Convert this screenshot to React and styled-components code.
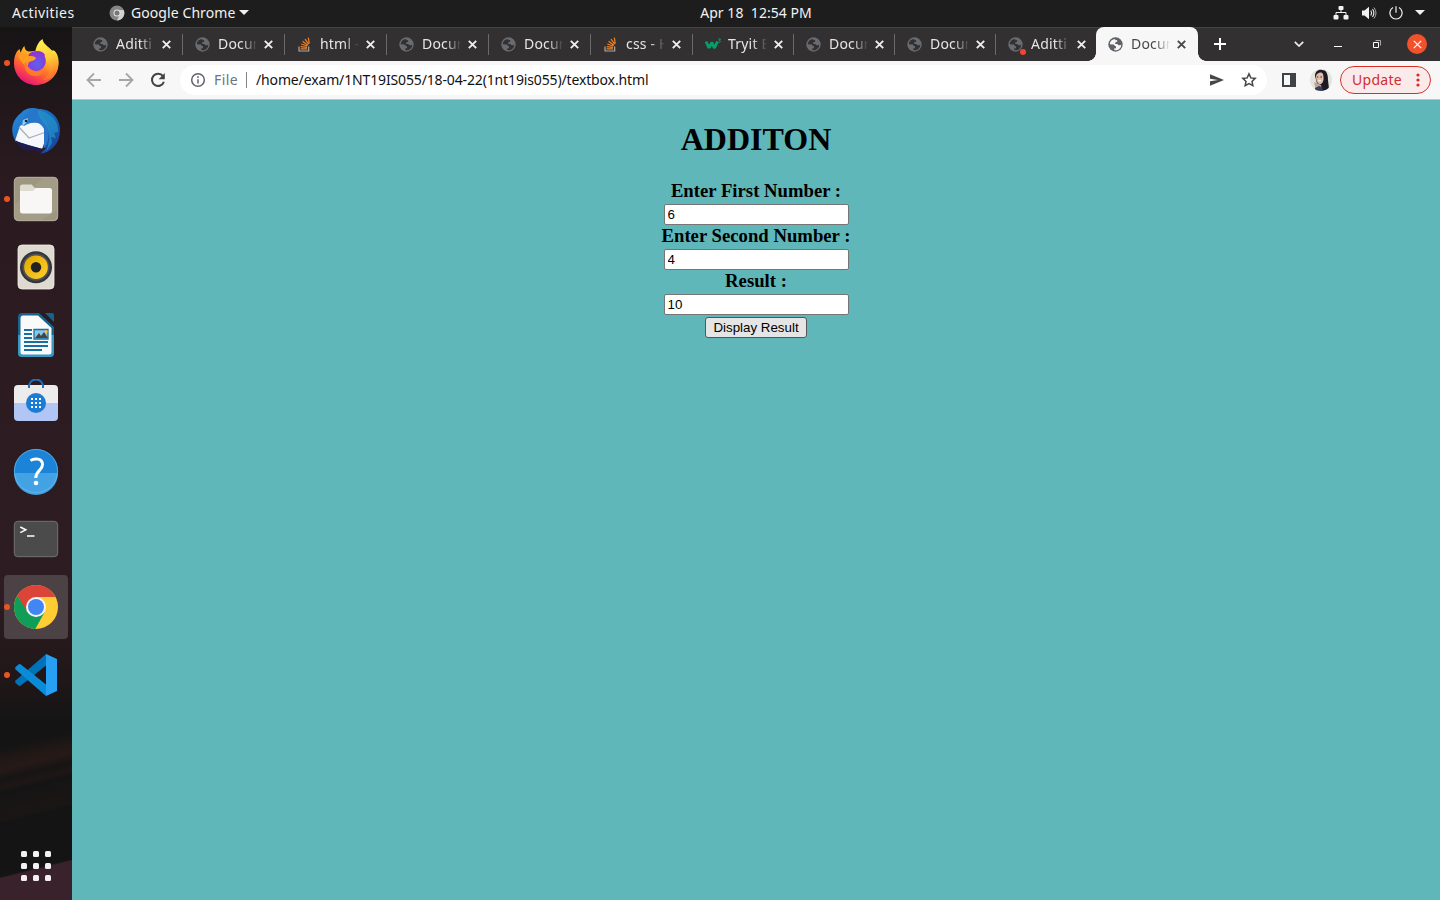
import React from 'react';
import styled, { createGlobalStyle } from 'styled-components';

const Global = createGlobalStyle`
  *{box-sizing:border-box}
  body{margin:0;overflow:hidden;background:#1d1d1d}
  svg{display:block;flex:none}
`;
const Desktop = styled.div`
  width:1440px;height:900px;display:flex;flex-direction:column;
  font-family:"Noto Sans",sans-serif;font-size:14px;
`;
const TopBar = styled.header`
  height:27px;flex:none;display:grid;grid-template-columns:1fr auto 1fr;align-items:center;padding-bottom:2px;
  background:#1d1d1d;color:#f2f2f2;font-size:14px;line-height:25px;
`;
const BarStart = styled.div`display:flex;align-items:center;padding-left:12px;`;
const Activities = styled.span`width:97px;letter-spacing:.42px;`;
const AppName = styled.span`margin:0 4px 0 6px;letter-spacing:.08px;`;
const Clock = styled.time`white-space:pre;letter-spacing:.05px;position:relative;left:36px;`;
const BarEnd = styled.div`display:flex;align-items:center;justify-content:flex-end;gap:12px;padding-right:15px;`;
const Workspace = styled.div`flex:1;display:flex;min-height:0;`;
const Dock = styled.nav`
  width:72px;display:flex;flex-direction:column;align-items:center;gap:4px;padding:4px 0 2px;
  background:
    linear-gradient(166deg,transparent 0 95.4%,#3a222d 95.6% 100%),
    linear-gradient(166deg,transparent 0 81%,#221816 82.5%,#251a18 83.5%,#171414 84.5%,#1e1716 85.5%,#151414 86%,#1a1615 89%,#141414 89.5%,transparent 91%),
    linear-gradient(#171416 0,#2b1b20 18%,#2d1c21 65%,#211719 74%,#141414 80%,#151414 100%);
`;
const DockItem = styled.div`
  width:64px;height:64px;flex:none;border-radius:4px;display:flex;align-items:center;justify-content:center;
  position:relative;background:${p => (p.$active ? '#4c4145' : 'transparent')};
`;
const RunDot = styled.i`position:absolute;left:0;top:29px;width:6px;height:6px;border-radius:50%;background:#e95420;`;
const AppsGrid = styled.div`
  margin-top:auto;margin-bottom:17px;display:grid;grid-template-columns:repeat(3,6px);gap:6px;
`;
const AppsDot = styled.i`height:6px;border-radius:1.5px;background:#f2f0f0;`;
const Browser = styled.main`flex:1;display:flex;flex-direction:column;min-width:0;`;
const TabStrip = styled.div`
  height:34px;flex:none;display:flex;background:#333031;border-top:1px solid #454344;padding-left:9px;
`;
const Tab = styled.div`
  width:${p => p.$w}px;height:33px;flex:none;display:flex;align-items:center;padding-left:12px;
  position:relative;color:#e6e6e6;
  &::after{content:'';position:absolute;right:0;top:6px;width:${p => (p.$line ? 1 : 0)}px;height:21px;background:#6b696a;}
`;
const ActiveTab = styled(Tab)`
  background:#f7f7f7;color:#45484b;height:34px;margin-top:-1px;padding-top:1px;border-radius:8px 8px 0 0;
  &::before,&::after{
    content:'';position:absolute;bottom:0;top:auto;width:8px;height:8px;
    background:radial-gradient(circle at 0 0,transparent 7.5px,#f7f7f7 8px);
  }
  &::before{left:-8px;}
  &::after{right:-8px;height:8px;width:8px;background:radial-gradient(circle at 100% 0,transparent 7.5px,#f7f7f7 8px);}
`;
const TabTitle = styled.span`
  margin:0 0 2px 8px;width:40px;overflow:hidden;white-space:nowrap;line-height:24px;letter-spacing:.2px;
  mask-image:linear-gradient(90deg,#000 60%,transparent 98%);
`;
const CloseSlot = styled.span`margin:0 0 1px 6px;`;
const Alert = styled.i`position:absolute;left:24px;top:21px;width:6px;height:6px;border-radius:50%;background:#f44336;`;
const NewTab = styled.div`width:44px;display:flex;align-items:center;justify-content:center;padding-bottom:1px;`;
const WindowTools = styled.div`margin-left:auto;display:flex;align-items:center;padding:0 13px 1px 0;`;
const ToolSlot = styled.div`width:${p => p.$w}px;display:flex;justify-content:center;`;
const CloseWindow = styled.div`
  width:20px;height:20px;border-radius:50%;background:#f2522b;display:flex;align-items:center;justify-content:center;
`;
const Toolbar = styled.div`
  height:39px;flex:none;display:flex;align-items:center;background:#f7f7f7;border-bottom:1px solid #c3c3c3;
  padding:0 9px 0 14px;
`;
const NavIcons = styled.div`display:flex;gap:16px;margin-right:14px;`;
const Address = styled.div`
  flex:1;height:30px;border-radius:15px;background:#fff;display:flex;align-items:center;padding:0 10px;
  font-size:14px;color:#111;margin-right:14px;
`;
const Scheme = styled.span`margin-left:8px;padding-right:8px;border-right:1px solid #80868b;line-height:16px;color:#6b7480;letter-spacing:.4px;`;
const Path = styled.span`margin:0 0 2px 9px;letter-spacing:-.14px;white-space:nowrap;`;
const AddressTools = styled.div`margin-left:auto;display:flex;gap:16px;`;
const Avatar = styled.div`margin:0 8px 0 13px;`;
const Update = styled.div`
  width:91px;height:28px;border:1px solid #d93025;border-radius:14px;background:#faebea;color:#d32b2b;
  display:flex;align-items:center;justify-content:space-between;padding:0 10px 0 11px;
`;
const UpdateText = styled.span`letter-spacing:.3px;line-height:20px;`;
const Page = styled.section`
  flex:1;background:#5fb7ba;display:flex;flex-direction:column;align-items:center;color:#000;
  font-family:"Liberation Serif",serif;
`;
const Title = styled.h1`margin:21px 0 22px;font-size:32px;line-height:37px;font-weight:700;`;
const Label = styled.label`height:24px;line-height:22px;font-size:18.72px;font-weight:700;white-space:nowrap;`;
const Field = styled.input`
  width:185px;height:21px;border:1px solid #767676;border-radius:2px;background:#fff;padding:1px 2.5px;
  font:13.333px "Liberation Sans",sans-serif;color:#000;outline:0;margin:0 0 0 1px;
`;
const Submit = styled.button`
  width:102px;height:21px;margin-top:2px;padding:0;border:1px solid #555;border-radius:3px;background:#e5e5e5;
  font:13.333px "Liberation Sans",sans-serif;color:#000;white-space:nowrap;
`;

const Globe = ({ hole, fill = '#686b6f' }) => (
  <svg width="15" height="15" viewBox="0 0 15 15">
    <circle cx="7.5" cy="7.5" r="7.2" fill={fill} />
    <path d="M7.2 1.9C4.2 2 2 4.3 1.8 7.2l3.1.2c1.4 0 1.9.6 1.8 1.7l1.3.2v1.9l-1.8.2v1.7c2 .5 4.6-.2 6-2.2.8-1.1 1.1-2.2 1-3.5-.8 1-1.800 1-2.800.7L9.200 7.100 7.300 6.900 7.100 5.400l2-.6V3.100L7.200 3.300z" fill={hole} />
  </svg>
);
const Stack = () => (
  <svg width="15" height="15" viewBox="0 0 15 15" fill="none">
    <path d="M2 9.500v4.500h9.700V9.500" stroke="#aaa" strokeWidth="1.200" />
    <path d="M3.600 11.900h6.500M3.700 9.600l6.400.7M4.300 7l6 2M5.600 4.300l5.300 3.900M8 2.100l3.700 5.100M11.300.7l1 6" stroke="#f48024" strokeWidth="1.200" />
  </svg>
);
const W3Svg = styled.svg`margin-right:-2px;`;
const W3 = () => (
  <W3Svg width="17" height="15" viewBox="0 0 17 15" fill="none" stroke="#04a06b">
    <path d="M1 4.500l3 6.500 2.700-5.500L9.500 11l3-6.500" strokeWidth="2.800" strokeLinejoin="bevel" />
    <path d="M13.300 2h2.200l-1.200 1.500c1.700 0 1.500 2.200-.9 1.700" strokeWidth="1" />
  </W3Svg>
);
const Cross = ({ color = '#eee', size = 9, w = 1.9 }) => (
  <svg width={size} height={size} viewBox="0 0 9 9"><path d="M.8.8l7.400 7.400M8.200.8L.8 8.200" stroke={color} strokeWidth={w} /></svg>
);
const Caret = () => <svg width="10" height="5" viewBox="0 0 10 5"><path d="M0 0h10L5 5z" fill="#f2f2f2" /></svg>;
const Dots = () => <svg width="4" height="14" viewBox="0 0 4 14" fill="#d32b2b"><circle cx="2" cy="2" r="1.600" /><circle cx="2" cy="7" r="1.600" /><circle cx="2" cy="12" r="1.600" /></svg>;

const Icon48 = ({ children }) => <svg width="48" height="48" viewBox="0 0 48 48">{children}</svg>;

const Firefox = () => (
  <Icon48>
    <defs>
      <linearGradient id="ffBody" x1=".85" y1=".1" x2=".3" y2="1"><stop offset="0" stopColor="#fff04a" /><stop offset=".35" stopColor="#ffa722" /><stop offset=".65" stopColor="#ff5a36" /><stop offset="1" stopColor="#e4107e" /></linearGradient>
      <linearGradient id="ffFlame" x1=".3" y1="0" x2=".5" y2="1"><stop offset="0" stopColor="#fff44f" /><stop offset=".5" stopColor="#ffcb36" /><stop offset="1" stopColor="#ff6a2b" /></linearGradient>
      <radialGradient id="ffGlobe" cx=".55" cy=".65" r=".7"><stop offset="0" stopColor="#5b62f0" /><stop offset="1" stopColor="#9a2bd0" /></radialGradient>
    </defs>
    <path d="M2 24C2 17 4.500 12 7.500 10l1 3.500C10 11 10.500 8.500 12.500 7c0 3 1.500 5 4 5.500L24 12l18-.5 2 2c2 3 2.800 7 2.500 11C46 37 36 46 24 46S2 37 2 24z" fill="url(#ffBody)" />
    <path d="M23 14C24 8 26 3 30.500 0c.5 6 8.500 8 11.500 15l.500-2.500C46 17 47 24 46 29c-2 9-9 12-15 12 7-5 8-12 4-18-3-5-8-7-12-9z" fill="url(#ffFlame)" />
    <path d="M17 15c6-5 14-3 16 1l-.5 1c3 5 1 14-8 15-7 0-10-4-10-9z" fill="url(#ffGlobe)" />
    <path d="M6 16c6-2 8 0 11 1 3 0 6 .3 7 2-1 3-5 3-7 4-1 2-1 3-1 4-4 0-8-5-10-11z" fill="#ff9d20" />
    <path d="M14.500 23c1 6 5 9 11 9.500 4 0 6-1 8-3-1 4-5 7.500-10 7.500-7 0-12-6-11-13z" fill="#ff7a2c" />
  </Icon48>
);
const Thunderbird = () => (
  <Icon48>
    <defs><linearGradient id="tbBody" x1="0" y1="0" x2="1" y2="1"><stop offset="0" stopColor="#2c8bdc" /><stop offset=".5" stopColor="#1968bd" /><stop offset="1" stopColor="#193b91" /></linearGradient></defs>
    <path d="M9 6C13 1 20 0 27 2c12 0 21 9 21 21 0 14-9 22-20 24l6-6L8 39C-2 31-3 15 9 6z" fill="url(#tbBody)" />
    <path d="M8 19l5-3 20-1 1 16-4 11L3 34 7 22z" fill="#f6f7fa" /><path d="M7 20l10 11 17-6" fill="none" stroke="#a9aeb9" strokeWidth="1.300" />
    <path d="M10 18C12 7 20 2 27 2c-2 3 0 6 5 10 5 6 6 13 3 25l-3 4V22C28 14 20 14 12 19z" fill="#2876ca" />
    <path d="M26 3c14 3 21 12 20 22l-4 1 2 5-5-1 1 6-6 9c3-8 5-17 1-25C30 13 25 9 26 3z" fill="#2598cd" opacity=".65" />
    <path d="M3 33c7 4 18 6 28 9l-2 5-6-4C13 45 6 41 3 33z" fill="#221c4e" /><path d="M10 19l1-6 5-2-1 4-4 4z" fill="#8fd0ee" /><circle cx="14" cy="14" r="1.300" fill="#222" />
  </Icon48>
);
const Files = () => (
  <Icon48>
    <rect x="2.300" y="2.300" width="43.400" height="43.400" rx="4" fill="#9d9680" stroke="#b9b4a2" />
    <path d="M2.500 30L31 2.500h11a3 3 0 013 3V35L30 45H5a3 3 0 01-3-3z" fill="#aaa48f" opacity=".45" />
    <path d="M8 17v-5a2.500 2.500 0 012.500-2.500h9L23 13h7v8H8z" fill="#dedbd0" />
    <path d="M8 16h13l3-3h13.500a2.500 2.500 0 012.500 2.500V36a2.500 2.500 0 01-2.500 2.500h-27A2.500 2.500 0 018 36z" fill="#f8f7f6" />
  </Icon48>
);
const Music = () => (
  <Icon48>
    <defs><linearGradient id="muCone" x1="0" y1="0" x2="1" y2="1"><stop offset="0" stopColor="#dda500" /><stop offset=".5" stopColor="#f2bd12" /><stop offset="1" stopColor="#ffcf35" /></linearGradient></defs>
    <rect x="6" y="2" width="36" height="44" rx="4" fill="#dedad0" stroke="#f2efe8" strokeWidth=".8" />
    <circle cx="24" cy="24.200" r="16" fill="#35363b" /><circle cx="24" cy="24.200" r="13.500" fill="#535353" /><circle cx="24" cy="24.200" r="11.800" fill="url(#muCone)" /><circle cx="24" cy="24.200" r="5.200" fill="#222" />
  </Icon48>
);
const Writer = () => (
  <Icon48>
    <path d="M10 2h17l15 14v26a4 4 0 01-4 4H10a4 4 0 01-4-4V6a4 4 0 014-4z" fill="#16638e" />
    <path d="M6 24h36v18a4 4 0 01-4 4H10a4 4 0 01-4-4z" fill="#3798c2" />
    <path d="M11 4.500h15L39.500 17v24a2.500 2.500 0 01-2.500 2.500H11A2.500 2.500 0 018.500 41V7A2.500 2.500 0 0111 4.500z" fill="#fafafa" />
    <path d="M33 2h7a2 2 0 012 2v7z" fill="#16638e" />
    <path d="M12 19h8M12 23h8M12 27h8M12 31h24M12 35h24M12 39h18" stroke="#16719f" strokeWidth="2" />
    <path d="M22 18.500h14v9.500H22z" fill="#88c5e7" stroke="#16719f" strokeWidth="1.300" /><path d="M23 27l4-5 2 3 3-4 4 6z" fill="#444" /><circle cx="34" cy="20.500" r="1.600" fill="#f4bf31" />
  </Icon48>
);
const Software = () => (
  <Icon48>
    <path d="M17 8C17-2 31-2 31 8" fill="none" stroke="#1b72bd" strokeWidth="2" />
    <path d="M6 6h36a4 4 0 014 4v15H2V10a4 4 0 014-4z" fill="#ececec" /><path d="M2 24h44v14a4 4 0 01-4 4H6a4 4 0 01-4-4z" fill="#b1c6f4" />
    <path d="M17 9V6M31 9V6" stroke="#1b72bd" strokeWidth="2" /><circle cx="24" cy="24" r="10" fill="#1a7cd4" />
    <g fill="#fff">{[19, 23, 27].map(y => [19, 23, 27].map(x => <rect key={`${x}${y}`} x={x} y={y} width="2" height="2" />))}</g>
  </Icon48>
);
const Help = () => (
  <Icon48>
    <circle cx="24" cy="24" r="22" fill="#1b83d8" /><path d="M2 26a22 22 0 0044 0z" fill="#43a2e3" />
    <circle cx="24" cy="24" r="21.600" fill="none" stroke="#6eb9ed" strokeWidth=".7" />
    <path d="M18.500 13.500c4-2.500 12-2.500 12 4 0 6-6.700 6-6.700 13.500" fill="none" stroke="#fff" strokeWidth="3" /><circle cx="24" cy="36" r="2.300" fill="#fff" />
  </Icon48>
);
const Terminal = () => (
  <Icon48>
    <rect x="2.300" y="6.300" width="43.400" height="35.400" rx="3.500" fill="#4b4b4b" stroke="#727272" />
    <path d="M8.300 12l5.500 2.800-5.500 2.800M15 21h7.500" fill="none" stroke="#fff" strokeWidth="1.500" />
  </Icon48>
);
const Chrome = () => (
  <Icon48>
    <circle cx="24" cy="24" r="22" fill="#fc3" />
    <path d="M5.300 12.500A22 22 0 0124 2a22 22 0 0119.200 11.500L44 14H24L14 29z" fill="#db4437" />
    <path d="M5.300 12.500A22 22 0 0023.300 46L32.700 29 24 34l-8.700-5z" fill="#0f9d58" />
    <circle cx="24" cy="24" r="10" fill="#f5f5f5" /><circle cx="24" cy="24" r="8" fill="#4285f4" />
  </Icon48>
);
const Code = () => (
  <Icon48>
    <path d="M34 3L3.600 29.500q-1 1.200 0 2.500l2.800 2.500q1.200.8 2.500 0L34 14.500z" fill="#0072b8" />
    <path d="M34 45L3.600 18.500q-1-1.200 0-2.500l2.800-2.500q1.200-.8 2.500 0L34 33.500z" fill="#0a8bd8" />
    <path d="M34 3l11 5v32l-11 5z" fill="#27a0f3" />
  </Icon48>
);

const dockApps = [
  { id: 'firefox', Art: Firefox, running: true }, { id: 'mail', Art: Thunderbird }, { id: 'files', Art: Files, running: true },
  { id: 'music', Art: Music }, { id: 'writer', Art: Writer }, { id: 'software', Art: Software }, { id: 'help', Art: Help },
  { id: 'terminal', Art: Terminal }, { id: 'chrome', Art: Chrome, running: true, active: true }, { id: 'code', Art: Code, running: true },
];
const tabs = [
  { title: 'Aditti', w: 102 }, { title: 'Docum', w: 102 }, { title: 'html - H', icon: 'stack', w: 102 }, { title: 'Docum', w: 102 },
  { title: 'Docum', w: 102 }, { title: 'css - H', icon: 'stack', w: 102 }, { title: 'Tryit E', icon: 'w3', w: 101 },
  { title: 'Docum', w: 101 }, { title: 'Docum', w: 101 }, { title: 'Aditti', alert: true, w: 100 },
];
const TabIcon = ({ kind }) => (kind === 'stack' ? <Stack /> : kind === 'w3' ? <W3 /> : <Globe hole="#333031" />);

const fields = [['Enter First Number :', '6'], ['Enter Second Number :', '4'], ['Result :', '10']];

export default function App() {
  return (
    <Desktop>
      <Global />
      <TopBar>
        <BarStart>
          <Activities>Activities</Activities>
          <svg width="16" height="16" viewBox="0 0 16 16"><circle cx="8" cy="8" r="7.500" fill="#858585" /><path d="M8 5h6.700A7.500 7.500 0 018 15.500L11 9z" fill="#d0d0d0" /><circle cx="8" cy="8" r="3.500" fill="#e5e5e5" /><circle cx="8" cy="8" r="2.500" fill="#777" /></svg>
          <AppName>Google Chrome</AppName><Caret />
        </BarStart>
        <Clock>Apr 18  12:54 PM</Clock>
        <BarEnd>
          <svg width="16" height="14" viewBox="0 0 16 14" fill="#f2f2f2"><rect x="5.500" width="5" height="4" rx="1" /><rect x=".5" y="9" width="5" height="4.500" rx="1" /><rect x="10.500" y="9" width="5" height="4.500" rx="1" /><path d="M3 9V6.500h10V9M8 3.500v3" fill="none" stroke="#f2f2f2" /></svg>
          <svg width="16" height="14" viewBox="0 0 16 14"><path d="M1 4.500h2.500L8 .8v12.400L3.500 9.500H1z" fill="#f2f2f2" /><path d="M9.800 4.500q1.600 2.500 0 5M11.500 3q2.800 4 0 8" fill="none" stroke="#f2f2f2" strokeWidth="1.100" /><path d="M13 1.500q4 5.500 0 11" fill="none" stroke="#aaa" /></svg>
          <svg width="14" height="14" viewBox="0 0 14 14" fill="none" stroke="#f2f2f2" strokeWidth="1.200"><path d="M4 1.600a6.100 6.100 0 106 0M7 .2v6.500" /></svg>
          <Caret />
        </BarEnd>
      </TopBar>
      <Workspace>
        <Dock>
          {dockApps.map(({ id, Art, running, active }) => (
            <DockItem key={id} $active={active}>{running && <RunDot />}<Art /></DockItem>
          ))}
          <AppsGrid>{Array.from({ length: 9 }, (_, i) => <AppsDot key={i} />)}</AppsGrid>
        </Dock>
        <Browser>
          <TabStrip>
            {tabs.map((t, i) => (
              <Tab key={i} $w={t.w} $line={i < 9}>
                <TabIcon kind={t.icon} />{t.alert && <Alert />}
                <TabTitle>{t.title}</TabTitle><CloseSlot><Cross /></CloseSlot>
              </Tab>
            ))}
            <ActiveTab $w={102}>
              <Globe hole="#f7f7f7" fill="#5f6368" /><TabTitle>Docum</TabTitle><CloseSlot><Cross color="#45484b" /></CloseSlot>
            </ActiveTab>
            <NewTab><svg width="12" height="12" viewBox="0 0 12 12"><path d="M6 0v12M0 6h12" stroke="#fff" strokeWidth="2" /></svg></NewTab>
            <WindowTools>
              <ToolSlot $w={39}><svg width="10" height="6" viewBox="0 0 10 6"><path d="M.8.8L5 5 9.200.8" fill="none" stroke="#eee" strokeWidth="1.700" /></svg></ToolSlot>
              <ToolSlot $w={39}><svg width="8" height="6" viewBox="0 0 8 6"><path d="M0 5.500h8" stroke="#fff" /></svg></ToolSlot>
              <ToolSlot $w={40}><svg width="8" height="8" viewBox="0 0 8 8" fill="none"><path d="M.5 2.500h5v5h-5z" stroke="#fff" /><path d="M2.500.5h5v5" stroke="#aaa" /></svg></ToolSlot>
              <ToolSlot $w={10} />
              <CloseWindow><Cross color="#fff" w={1.2} /></CloseWindow>
            </WindowTools>
          </TabStrip>
          <Toolbar>
            <NavIcons>
              <svg width="16" height="16" viewBox="0 0 16 16" fill="none" stroke="#a4a6a8" strokeWidth="1.800"><path d="M15 8H2M8 1.500L1.500 8 8 14.500" /></svg>
              <svg width="16" height="16" viewBox="0 0 16 16" fill="none" stroke="#a4a6a8" strokeWidth="1.800"><path d="M1 8h13M8 1.500L14.500 8 8 14.500" /></svg>
              <svg width="16" height="16" viewBox="0 0 16 16"><path d="M13 4.200A6.100 6.100 0 1013.900 9.700" fill="none" stroke="#404346" strokeWidth="2" /><path d="M14.800 1v6.200H8.600z" fill="#404346" /></svg>
            </NavIcons>
            <Address>
              <svg width="16" height="16" viewBox="0 0 16 16" fill="none" stroke="#5f6368" strokeWidth="1.500"><circle cx="8" cy="8" r="6.300" /><path d="M8 7.200v4.300M8 4.300v1.600" /></svg>
              <Scheme>File</Scheme><Path>/home/exam/1NT19IS055/18-04-22(1nt19is055)/textbox.html</Path>
              <AddressTools>
                <svg width="16" height="16" viewBox="0 0 16 16"><path d="M1 2.200L15 8 1 13.800V9.300L9 8 1 6.700z" fill="#45484b" /></svg>
                <svg width="16" height="16" viewBox="0 0 16 16"><path d="M8 1.900l1.850 4 4.350.5-3.200 3 .85 4.300L8 11.600l-3.850 2.100.85-4.300-3.200-3 4.350-.5z" fill="none" stroke="#45484b" strokeWidth="1.500" /></svg>
              </AddressTools>
            </Address>
            <svg width="16" height="16" viewBox="0 0 16 16"><path d="M1 1h14v14H1zM3 3v10h6V3z" fill="#404346" fillRule="evenodd" /></svg>
            <Avatar>
              <svg width="22" height="22" viewBox="0 0 22 22">
                <defs><clipPath id="avatarClip"><circle cx="11" cy="11" r="11" /></clipPath></defs>
                <g clipPath="url(#avatarClip)">
                  <path d="M0 0h22v22H0z" fill="#e1e5da" /><path d="M5 7C5 2 9 0 12 1c5 0 6 5 6 10l1 9-6 2-5-4z" fill="#1d1a24" />
                  <path d="M6 7c1-3 5-5 7-2 1 4 1 8-2 10-3 1-5-3-5-8z" fill="#e2bcab" /><path d="M4 13l3 1 4 2 1 4-6 2z" fill="#c9a195" />
                  <path d="M5 19l4-2 3 1 1 4H5z" fill="#35405b" />
                  <path d="M7 8h1.300M10.500 8H12" stroke="#33242a" /><path d="M8 11.800h3" stroke="#fff" />
                </g>
              </svg>
            </Avatar>
            <Update><UpdateText>Update</UpdateText><Dots /></Update>
          </Toolbar>
          <Page>
            <Title>ADDITON</Title>
            {fields.map(([label, value]) => (
              <React.Fragment key={label}><Label>{label}</Label><Field readOnly value={value} /></React.Fragment>
            ))}
            <Submit>Display Result</Submit>
          </Page>
        </Browser>
      </Workspace>
    </Desktop>
  );
}
